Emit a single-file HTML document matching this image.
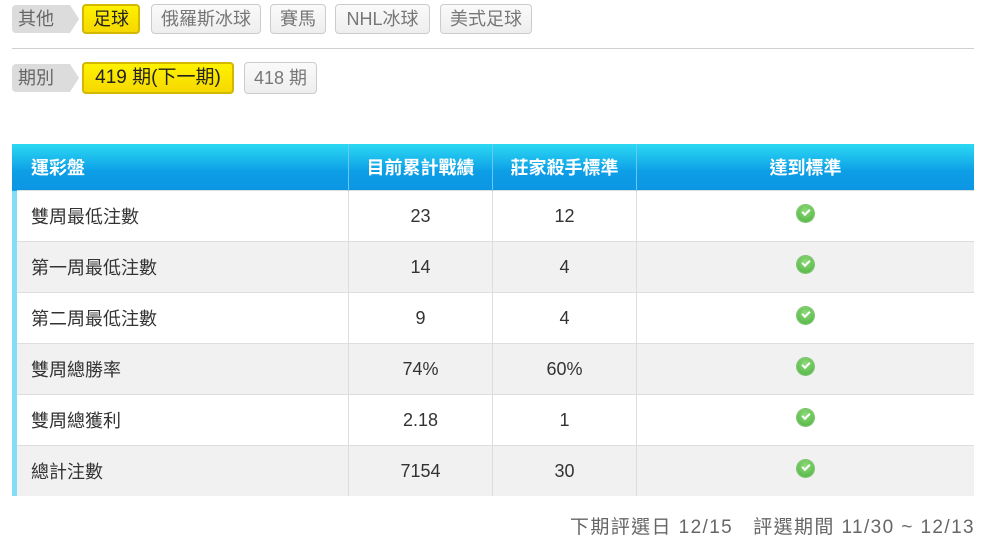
<!DOCTYPE html>
<html><head><meta charset="utf-8"><style>
body{margin:0;width:989px;height:541px;background:#fff;font-family:"Liberation Sans","Noto Sans CJK TC",sans-serif;position:relative;overflow:hidden}
.a{position:absolute;box-sizing:border-box}
.lbl{background:#dcdcdc;color:#666;font-size:18px;line-height:28px;padding-left:6px;border-radius:4px 0 0 4px}
.lbl:after{content:"";position:absolute;right:-9px;top:0;border-left:9px solid #dcdcdc;border-top:14px solid transparent;border-bottom:14px solid transparent}
.btn{border:1px solid #ccc;border-radius:4px;background:linear-gradient(#fafafa,#eee);color:#777;font-size:18px;line-height:28px;text-align:center;white-space:nowrap}
.y{background:linear-gradient(#fff200,#f5d800);border:2px solid #d4b800;color:#222;line-height:26px}
table{position:absolute;left:12px;top:144px;width:962px;border-collapse:collapse;table-layout:fixed;font-size:18px;color:#333}
th{height:46px;background:linear-gradient(#2bd9f3,#0d9ee6 60%,#0b96e3);color:#fff;font-weight:bold;border-left:1px solid #6cc8ef;padding:0}
td{height:50px;border-top:1px solid #ddd;border-left:1px solid #ddd;text-align:center;padding:0}
tr:nth-child(odd) td{background:#f1f1f1}
td.f{text-align:left;padding-left:14px;border-left:5px solid #84dcf7}
th.f{text-align:left;padding-left:14px;border-left:5px solid #12a8e8}
.hd{background:linear-gradient(#2bd9f3,#0d9ee6 60%,#0b96e3);z-index:2}
.ok{display:inline-block;width:17px;height:17px;border-radius:50%;background:radial-gradient(circle at 50% 35%,#8fdc7a,#4aae3c);box-shadow:0 0 0 1px #7cc46c;position:relative;vertical-align:middle;top:-3px}
.ok:after{content:"";position:absolute;left:5px;top:4px;width:6px;height:3px;border-left:2px solid #fff;border-bottom:2px solid #fff;transform:rotate(-45deg)}
</style></head><body>
<div class="a lbl" style="left:12px;top:5px;width:58px;height:28px">其他</div>
<div class="a btn y" style="left:82px;top:4px;width:58px;height:30px">足球</div>
<div class="a btn" style="left:151px;top:4px;width:110px;height:30px">俄羅斯冰球</div>
<div class="a btn" style="left:270px;top:4px;width:56px;height:30px">賽馬</div>
<div class="a btn" style="left:335px;top:4px;width:95px;height:30px">NHL冰球</div>
<div class="a btn" style="left:440px;top:4px;width:92px;height:30px">美式足球</div>
<div class="a" style="left:12px;top:48px;width:962px;height:1px;background:#d0d0d0"></div>
<div class="a lbl" style="left:12px;top:64px;width:58px;height:28px">期別</div>
<div class="a btn y" style="left:82px;top:62px;width:152px;height:32px;line-height:28px;font-size:19px">419 期(下一期)</div>
<div class="a btn" style="left:244px;top:62px;width:73px;height:32px;line-height:30px">418 期</div>
<table>
<colgroup><col style="width:334px"><col style="width:144px"><col style="width:144px"><col></colgroup>
<tr><th class="f">運彩盤</th><th>目前累計戰績</th><th>莊家殺手標準</th><th>達到標準</th></tr>
<tr><td class="f">雙周最低注數</td><td>23</td><td>12</td><td><span class="ok"></span></td></tr>
<tr><td class="f">第一周最低注數</td><td>14</td><td>4</td><td><span class="ok"></span></td></tr>
<tr><td class="f">第二周最低注數</td><td>9</td><td>4</td><td><span class="ok"></span></td></tr>
<tr><td class="f">雙周總勝率</td><td>74%</td><td>60%</td><td><span class="ok"></span></td></tr>
<tr><td class="f">雙周總獲利</td><td>2.18</td><td>1</td><td><span class="ok"></span></td></tr>
<tr><td class="f">總計注數</td><td>7154</td><td>30</td><td><span class="ok"></span></td></tr>
</table>
<div class="a hd" style="left:12px;top:144px;width:6px;height:46px"></div>
<div class="a" style="right:14px;top:512px;font-size:19px;color:#666;white-space:pre;letter-spacing:1.4px">下期評選日 12/15   評選期間 11/30 ~ 12/13</div>
</body></html>
